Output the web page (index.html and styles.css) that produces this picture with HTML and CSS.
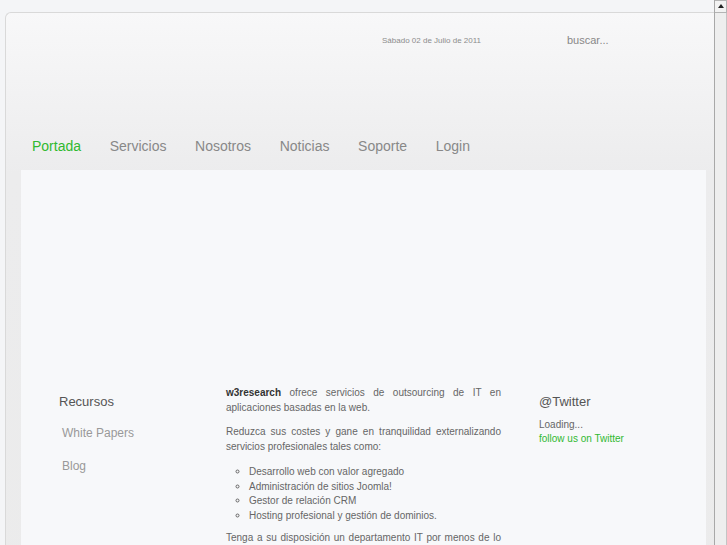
FILE: index.html
```html
<!DOCTYPE html>
<html lang="es">
<head>
	<meta charset="UTF-8">
	<title>w3research</title>
	<link rel="stylesheet" href="styles.css">
</head>
<body>
	<div class="wrap">
		<div class="top">
			<div class="date">Sábado 02 de Julio de 2011</div>
			<input class="search" type="text" value="buscar...">
		</div>

		<ul class="nav">
			<li class="active"><a href="#">Portada</a></li>
			<li><a href="#">Servicios</a></li>
			<li><a href="#">Nosotros</a></li>
			<li><a href="#">Noticias</a></li>
			<li><a href="#">Soporte</a></li>
			<li><a href="#">Login</a></li>
		</ul>

		<div class="content">
			<div class="banner"></div>

			<div class="cols">
				<div class="col-left">
					<h3>Recursos</h3>
					<ul class="links">
						<li><a href="#">White Papers</a></li>
						<li><a href="#">Blog</a></li>
					</ul>
				</div>

				<div class="col-main">
					<p><b>w3research</b> ofrece servicios de outsourcing de IT en aplicaciones basadas en la web.</p>
					<p>Reduzca sus costes y gane en tranquilidad externalizando servicios profesionales tales como:</p>
					<ul>
						<li>Desarrollo web con valor agregado</li>
						<li>Administración de sitios Joomla!</li>
						<li>Gestor de relación CRM</li>
						<li>Hosting profesional y gestión de dominios.</li>
					</ul>
					<p>Tenga a su disposición un departamento IT por menos de lo que cuesta un empleado, con la garantía y la experiencia de un equipo de profesionales.</p>
					<p>Contacte con nosotros y le informaremos sin compromiso.</p>
				</div>

				<div class="col-right">
					<h3>@Twitter</h3>
					<div class="tweets">Loading...</div>
					<a class="follow" href="#">follow us on Twitter</a>
				</div>
			</div>
		</div>
	</div>

	<div class="scrollbar">
		<div class="sb-up"></div>
		<div class="sb-thumb"><div class="sb-grip"></div></div>
	</div>
</body>
</html>
```

FILE: styles.css
```css
html{
	background: #f4f5f7;
}

body{
	margin: 0 13px 0 0;
	font-family: "Liberation Sans", Arial, sans-serif;
	color: #666;
}

a{
	text-decoration: none;
}

.wrap{
	margin: 12px 0 0 5px;
	border: 1px solid #d9d9d9;
	border-right: none;
	border-bottom: none;
	border-radius: 6px 0 0 0;
	background: linear-gradient(#f8f8f9, #ececed 160px, #ebebeb);
	padding-bottom: 40px;
}

.top{
	display: flex;
	align-items: center;
	height: 54px;
	padding-left: 376px;
}

.date{
	width: 185px;
	font-size: 8px;
	color: #8c8c8c;
}

.search{
	width: 120px;
	padding: 0;
	border: none;
	background: transparent;
	font-family: "Liberation Sans", Arial, sans-serif;
	font-size: 11px;
	color: #888;
	outline: none;
}

.nav{
	display: flex;
	list-style: none;
	margin: 69px 0 0;
	padding: 0 0 0 26px;
	height: 20px;
}

.nav li{
	margin-right: 28.6px;
}

.nav a{
	display: block;
	font-size: 14px;
	line-height: 20px;
	color: #888;
}

.nav li.active a{
	color: #30b930;
}

.content{
	margin: 14px 8px 0 15px;
	background: #f7f8fa;
	min-height: 500px;
}

.banner{
	height: 215px;
}

.cols{
	display: flex;
	align-items: flex-start;
}

.col-left{
	width: 167px;
	padding-left: 38px;
}

.col-left h3,
.col-right h3{
	margin: 9px 0 0;
	font-size: 13px;
	font-weight: normal;
	line-height: 16px;
	color: #555;
}

.links{
	list-style: none;
	margin: 14px 0 0;
	padding-left: 3px;
}

.links li{
	line-height: 16px;
	margin-bottom: 15.5px;
}

.links a{
	font-size: 12px;
	color: #999;
}

.col-main{
	width: 275px;
	font-size: 10px;
	line-height: 15px;
	text-align: justify;
	color: #666;
}

.col-main p{
	margin: 0 0 9px;
}

.col-main b{
	color: #333;
}

.col-main ul{
	list-style: circle;
	margin: 11px 0 7px;
	padding-left: 23px;
	line-height: 14.6px;
}

.col-right{
	margin-left: 38px;
	font-size: 10px;
	line-height: 14px;
}

.tweets{
	margin-top: 8px;
	color: #666;
}

.follow{
	color: #30b930;
}

/* browser scrollbar as seen in the capture */
.scrollbar{
	position: fixed;
	top: 0;
	right: 0;
	width: 12px;
	height: 100%;
	border-left: 1px solid #a8a8a8;
	background: #e9e9e9;
}

.sb-up{
	position: relative;
	height: 11px;
	border: 1px solid #b4b4b4;
	border-left: none;
	background: #f2f2f2;
}

.sb-up:after{
	content: "";
	position: absolute;
	left: 3px;
	top: 3px;
	border-left: 3px solid transparent;
	border-right: 3px solid transparent;
	border-bottom: 4px solid #222;
}

.sb-thumb{
	position: relative;
	height: 640px;
	border-right: 1px solid #c4c4c4;
	background: #eeeeee;
}

.sb-grip{
	position: absolute;
	left: 3px;
	top: 316px;
	width: 6px;
	height: 16px;
	background: radial-gradient(circle, #a0a0a0 35%, transparent 45%) 0 0 / 2px 2px;
}
```
